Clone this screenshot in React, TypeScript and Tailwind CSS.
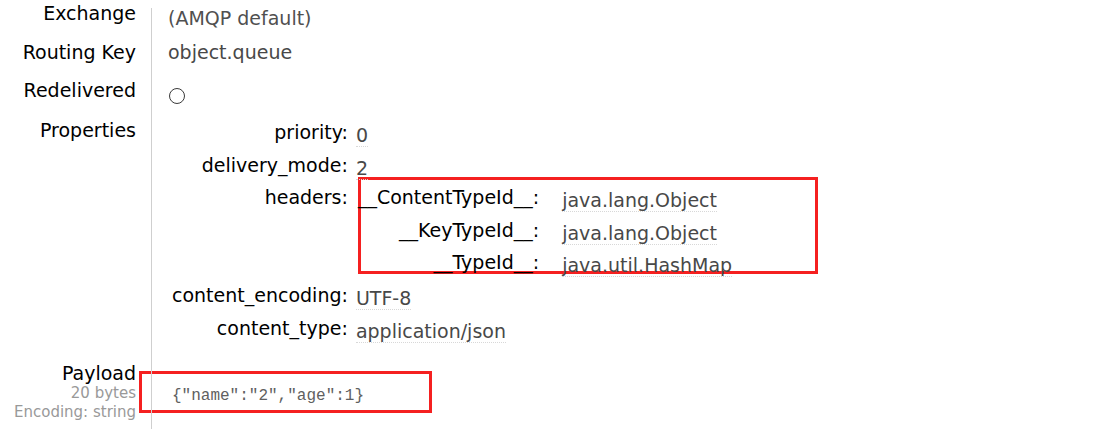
const props: [string, string][] = [
  ["priority", "0"],
  ["delivery_mode", "2"],
];

const headers: [string, string][] = [
  ["__ContentTypeId__", "java.lang.Object"],
  ["__KeyTypeId__", "java.lang.Object"],
  ["__TypeId__", "java.util.HashMap"],
];

const tail: [string, string][] = [
  ["content_encoding", "UTF-8"],
  ["content_type", "application/json"],
];

function Dotted({ children }: { children: React.ReactNode }) {
  return (
    <span className="relative top-[3px] border-b border-dotted border-[#d8d8d8] text-[#484848]">
      {children}
    </span>
  );
}

function Key({ children }: { children: React.ReactNode }) {
  return <div className="pl-1 text-right text-black whitespace-nowrap">{children}:</div>;
}

export default function App() {
  return (
    <div className="relative isolate h-[429px] w-[1118px] overflow-hidden bg-white font-['DejaVu_Sans','Verdana',sans-serif] text-[19px] leading-[26px]">
      {/* annotation boxes */}
      <div className="absolute left-[358px] top-[177px] z-0 h-[97px] w-[460px] border-[3px] border-[#f52020]" />
      <div className="absolute left-[139px] top-[371px] z-0 h-[42px] w-[293px] border-[3px] border-[#f52020]" />

      <div className="relative z-10 flex h-full">
        {/* labels */}
        <div className="w-[136px] shrink-0 text-right text-black">
          <div className="h-[38px]">Exchange</div>
          <div className="h-[39px] pt-px">Routing Key</div>
          <div className="h-[40px]">Redelivered</div>
          <div className="h-[245px]">Properties</div>
          <div className="leading-[22px]">Payload</div>
          <div className="text-[15px] leading-[19px] text-[#999]">20 bytes</div>
          <div className="text-[15px] leading-[19px] text-[#999]">Encoding: string</div>
        </div>

        {/* values */}
        <div className="ml-[15px] mt-2 flex-1 border-l border-[#cfcfcf] pl-4">
          <div className="-mt-2">
            <div className="h-[38px] pt-[5px] text-[#505050]">(AMQP default)</div>
            <div className="h-[39px] pt-px text-[#484848]">object.queue</div>
            <div className="h-[40px] pt-[11px] pl-px">
              <div className="h-4 w-4 rounded-full border border-[#3a3a3a]" />
            </div>
            <div className="h-[245px] pt-[2px]">
              <div className="grid w-fit grid-cols-[auto_auto] gap-y-[6.6px]">
                {props.map(([k, v]) => (
                  <div key={k} className="contents">
                    <Key>{k}</Key>
                    <div className="pl-2">
                      <Dotted>{v}</Dotted>
                    </div>
                  </div>
                ))}
                <Key>headers</Key>
                <div className="pl-[10px]">
                  <div className="grid w-fit grid-cols-[auto_auto] gap-y-[6.6px]">
                    {headers.map(([k, v]) => (
                      <div key={k} className="contents">
                        <div className="text-right text-black whitespace-nowrap">{k}:</div>
                        <div className="pl-[23px]">
                          <Dotted>{v}</Dotted>
                        </div>
                      </div>
                    ))}
                  </div>
                </div>
                {tail.map(([k, v]) => (
                  <div key={k} className="contents">
                    <Key>{k}</Key>
                    <div className="pl-2">
                      <Dotted>{v}</Dotted>
                    </div>
                  </div>
                ))}
              </div>
            </div>
            <div className="pt-[24px] pl-1 font-['Liberation_Mono',monospace] text-[16px] leading-[20px] text-[#606060]">
              {'{"name":"2","age":1}'}
            </div>
          </div>
        </div>
      </div>
    </div>
  );
}
